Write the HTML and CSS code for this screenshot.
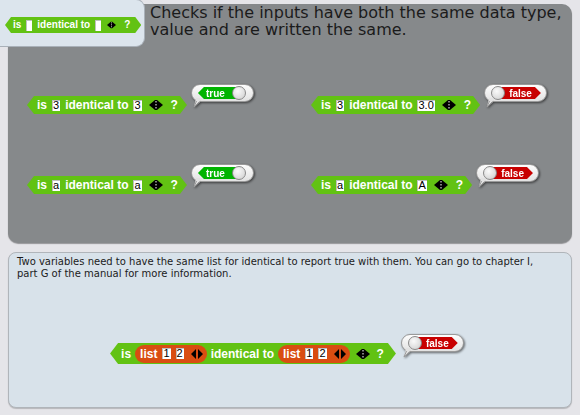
FILE: index.html
```html
<!DOCTYPE html>
<html>
<head>
<meta charset="utf-8">
<link rel="stylesheet" href="styles.css">
</head>
<body>
<div class="page">
  <section class="demo">
    <div class="example">
      <div class="block pred small">
        <span class="lbl">is</span><span class="slot empty"></span><span class="lbl">identical to</span><span class="slot empty"></span>
        <svg class="arrows sm" width="9" height="8" viewBox="0 0 14 10"><path d="M0 5 L6 0 L8 0 L14 5 L8 10 L6 10 Z" fill="#000"/><line x1="7" y1="1" x2="7" y2="9.5" stroke="#fff" stroke-width="1.2" stroke-dasharray="1.5 1.5"/></svg>
        <span class="lbl q">?</span>
      </div>
    </div>
    <p class="heading">Checks if the inputs have both the same data type, value and are written the same.</p>
    <div class="cases">
      <div class="case">
        <div class="block pred">
          <span class="lbl">is</span><span class="slot">3</span><span class="lbl">identical to</span><span class="slot">3</span>
          <svg class="arrows" width="14" height="10" viewBox="0 0 14 10"><path d="M0 5 L6 0 L8 0 L14 5 L8 10 L6 10 Z" fill="#000"/><line x1="7" y1="1" x2="7" y2="9.5" stroke="#fff" stroke-width="1" stroke-dasharray="1.5 1.5"/></svg>
          <span class="lbl q">?</span>
        </div>
        <div class="bubble-wrap">
          <div class="bubble">
            <div class="toggle"><span class="tv on">true</span><span class="knob on"></span></div>
            <svg class="tail" width="12" height="10" viewBox="0 0 12 10"><path d="M3 0 L1 9 L10 0 Z" fill="#e2e2e2"/><path d="M3.5 3 L1 9 L8 3" fill="none" stroke="#9a9a9a" stroke-width="1"/></svg>
          </div>
        </div>
      </div>
      <div class="case">
        <div class="block pred">
          <span class="lbl">is</span><span class="slot">3</span><span class="lbl">identical to</span><span class="slot">3.0</span>
          <svg class="arrows" width="14" height="10" viewBox="0 0 14 10"><path d="M0 5 L6 0 L8 0 L14 5 L8 10 L6 10 Z" fill="#000"/><line x1="7" y1="1" x2="7" y2="9.5" stroke="#fff" stroke-width="1" stroke-dasharray="1.5 1.5"/></svg>
          <span class="lbl q">?</span>
        </div>
        <div class="bubble-wrap">
          <div class="bubble">
            <div class="toggle"><span class="knob"></span><span class="tv off">false</span></div>
            <svg class="tail" width="12" height="10" viewBox="0 0 12 10"><path d="M3 0 L1 9 L10 0 Z" fill="#e2e2e2"/><path d="M3.5 3 L1 9 L8 3" fill="none" stroke="#9a9a9a" stroke-width="1"/></svg>
          </div>
        </div>
      </div>
      <div class="case">
        <div class="block pred">
          <span class="lbl">is</span><span class="slot">a</span><span class="lbl">identical to</span><span class="slot">a</span>
          <svg class="arrows" width="14" height="10" viewBox="0 0 14 10"><path d="M0 5 L6 0 L8 0 L14 5 L8 10 L6 10 Z" fill="#000"/><line x1="7" y1="1" x2="7" y2="9.5" stroke="#fff" stroke-width="1" stroke-dasharray="1.5 1.5"/></svg>
          <span class="lbl q">?</span>
        </div>
        <div class="bubble-wrap">
          <div class="bubble">
            <div class="toggle"><span class="tv on">true</span><span class="knob on"></span></div>
            <svg class="tail" width="12" height="10" viewBox="0 0 12 10"><path d="M3 0 L1 9 L10 0 Z" fill="#e2e2e2"/><path d="M3.5 3 L1 9 L8 3" fill="none" stroke="#9a9a9a" stroke-width="1"/></svg>
          </div>
        </div>
      </div>
      <div class="case">
        <div class="block pred">
          <span class="lbl">is</span><span class="slot">a</span><span class="lbl">identical to</span><span class="slot">A</span>
          <svg class="arrows" width="14" height="10" viewBox="0 0 14 10"><path d="M0 5 L6 0 L8 0 L14 5 L8 10 L6 10 Z" fill="#000"/><line x1="7" y1="1" x2="7" y2="9.5" stroke="#fff" stroke-width="1" stroke-dasharray="1.5 1.5"/></svg>
          <span class="lbl q">?</span>
        </div>
        <div class="bubble-wrap">
          <div class="bubble">
            <div class="toggle"><span class="knob"></span><span class="tv off">false</span></div>
            <svg class="tail" width="12" height="10" viewBox="0 0 12 10"><path d="M3 0 L1 9 L10 0 Z" fill="#e2e2e2"/><path d="M3.5 3 L1 9 L8 3" fill="none" stroke="#9a9a9a" stroke-width="1"/></svg>
          </div>
        </div>
      </div>
    </div>
  </section>
  <section class="note">
    <p class="note-text">Two variables need to have the same list for identical to report true with them. You can go to chapter I, part G of the manual for more information.</p>
    <div class="case wide">
      <div class="block pred tall">
        <span class="lbl">is</span>
        <span class="block list"><span class="lbl">list</span><span class="slot">1</span><span class="slot">2</span><svg class="larrows" width="12" height="10" viewBox="0 0 12 10"><path d="M0 5 L5 0 L5 10 Z M7 0 L12 5 L7 10 Z" fill="#000"/></svg></span>
        <span class="lbl">identical to</span>
        <span class="block list"><span class="lbl">list</span><span class="slot">1</span><span class="slot">2</span><svg class="larrows" width="12" height="10" viewBox="0 0 12 10"><path d="M0 5 L5 0 L5 10 Z M7 0 L12 5 L7 10 Z" fill="#000"/></svg></span>
        <svg class="arrows" width="14" height="10" viewBox="0 0 14 10"><path d="M0 5 L6 0 L8 0 L14 5 L8 10 L6 10 Z" fill="#000"/><line x1="7" y1="1" x2="7" y2="9.5" stroke="#fff" stroke-width="1" stroke-dasharray="1.5 1.5"/></svg>
        <span class="lbl q">?</span>
      </div>
      <div class="bubble-wrap">
        <div class="bubble">
          <div class="toggle"><span class="knob"></span><span class="tv off">false</span></div>
          <svg class="tail" width="12" height="10" viewBox="0 0 12 10"><path d="M3 0 L1 9 L10 0 Z" fill="#e2e2e2"/><path d="M3.5 3 L1 9 L8 3" fill="none" stroke="#9a9a9a" stroke-width="1"/></svg>
        </div>
      </div>
    </div>
  </section>
</div>
</body>
</html>
```

FILE: styles.css
```css
html, body {
  margin: 0;
  padding: 0;
}
body {
  background: #e5e5e9;
  width: 580px;
  height: 415px;
  overflow: hidden;
}
.page {
  display: flex;
  flex-direction: column;
}
.demo {
  position: relative;
  margin: 4px 8px 0;
  height: 239px;
  box-sizing: border-box;
  background: #86898b;
  border-radius: 10px;
  box-shadow: 0 1px 1px rgba(0, 0, 0, 0.35);
}
.example {
  position: absolute;
  left: -8px;
  top: -5px;
  width: 145px;
  height: 48px;
  box-sizing: border-box;
  background: #dce5ed;
  border: 1px solid #a9b1b9;
  border-left: none;
  border-radius: 0 9px 9px 0;
  display: flex;
  align-items: center;
  padding: 4px 0 0 5px;
}
.heading {
  margin: 0 0 0 142px;
  font: 16px/17px "DejaVu Sans", Verdana, sans-serif;
  color: #1b1b1b;
}
.cases {
  display: grid;
  grid-template-columns: 284px 260px;
  row-gap: 50px;
  margin-top: 46px;
  padding-left: 19px;
}
.case {
  display: flex;
  align-items: flex-start;
  gap: 4px;
}
.case > .block {
  margin-top: 12px;
}
.block {
  display: inline-flex;
  align-items: center;
  box-sizing: border-box;
  color: #fff;
  font: bold 12px "Liberation Sans", Arial, sans-serif;
  white-space: nowrap;
  flex: none;
}
.pred {
  height: 18px;
  gap: 5px;
  padding: 0 9px 0 10px;
  background: #62c213;
  clip-path: polygon(7px 0, calc(100% - 7px) 0, 100% 50%, calc(100% - 7px) 100%, 7px 100%, 0 50%);
}
.pred.small {
  height: 16px;
  font-size: 10px;
  padding: 0 11px 0 8px;
  clip-path: polygon(6px 0, calc(100% - 6px) 0, 100% 50%, calc(100% - 6px) 100%, 6px 100%, 0 50%);
}
.pred.tall {
  height: 21px;
  gap: 4px;
  padding: 0 12px 0 11px;
  clip-path: polygon(8px 0, calc(100% - 8px) 0, 100% 50%, calc(100% - 8px) 100%, 8px 100%, 0 50%);
}
.case.wide {
  gap: 5px;
}
.case.wide > .block {
  margin-top: 9px;
}
.list {
  height: 18px;
  gap: 5px;
  padding: 0 4px 0 5px;
  background: #d94d11;
  border-radius: 9px;
}
.lbl {
  line-height: 1;
}
.slot {
  display: inline-block;
  box-sizing: border-box;
  height: 11px;
  min-width: 6px;
  padding: 0 1px;
  background: #fff;
  color: #000;
  font: 11px/11px "Liberation Sans", Arial, sans-serif;
  box-shadow: inset 1px 1px 0 rgba(0, 0, 0, 0.25);
}
.slot.empty {
  width: 6px;
}
.arrows {
  margin: 0 3px 0 2px;
  flex: none;
}
.arrows.sm {
  margin: 0 3px 0 1px;
}
.larrows {
  margin-left: 2px;
  flex: none;
}
.bubble-wrap {
  filter: drop-shadow(1px 1px 1px rgba(0, 0, 0, 0.55));
  flex: none;
}
.bubble {
  position: relative;
  width: 63px;
  height: 18px;
  box-sizing: border-box;
  border: 1px solid #9a9a9a;
  border-radius: 9px;
  background: linear-gradient(#fdfdfd, #e2e2e2);
  display: flex;
  align-items: center;
  padding-left: 6px;
}
.tail {
  position: absolute;
  left: 1px;
  top: 13px;
}
.toggle {
  display: flex;
  align-items: center;
  height: 14px;
}
.tv {
  height: 12px;
  display: flex;
  align-items: center;
  color: #fff;
  font: bold 10px "Liberation Sans", Arial, sans-serif;
}
.tv.on {
  background: #00b400;
  padding: 0 14px 0 8px;
  clip-path: polygon(6px 0, 100% 0, 100% 100%, 6px 100%, 0 50%);
}
.tv.off {
  background: #c80000;
  padding: 0 9px 0 10px;
  margin-left: -6px;
  clip-path: polygon(0 0, calc(100% - 6px) 0, 100% 50%, calc(100% - 6px) 100%, 0 100%);
}
.knob {
  position: relative;
  z-index: 1;
  width: 14px;
  height: 14px;
  box-sizing: border-box;
  border-radius: 50%;
  border: 1px solid #8a8a8a;
  background: radial-gradient(circle at 40% 35%, #fafafa, #cdcdcd);
  flex: none;
}
.knob.on {
  margin-left: -7px;
}
.note {
  margin: 9px 8px 0;
  height: 156px;
  box-sizing: border-box;
  border: 1px solid #b0b5ba;
  border-radius: 8px;
  background: #d8e2ea;
  padding: 3px 8px 0 8px;
  box-shadow: 0 1px 1px rgba(0, 0, 0, 0.2);
}
.note-text {
  margin: 0;
  max-width: 530px;
  font: 10px/12px "DejaVu Sans", Verdana, sans-serif;
  color: #1b1b1b;
}
.case.wide {
  justify-content: center;
  margin-top: 54px;
  padding-right: 6px;
}
```
